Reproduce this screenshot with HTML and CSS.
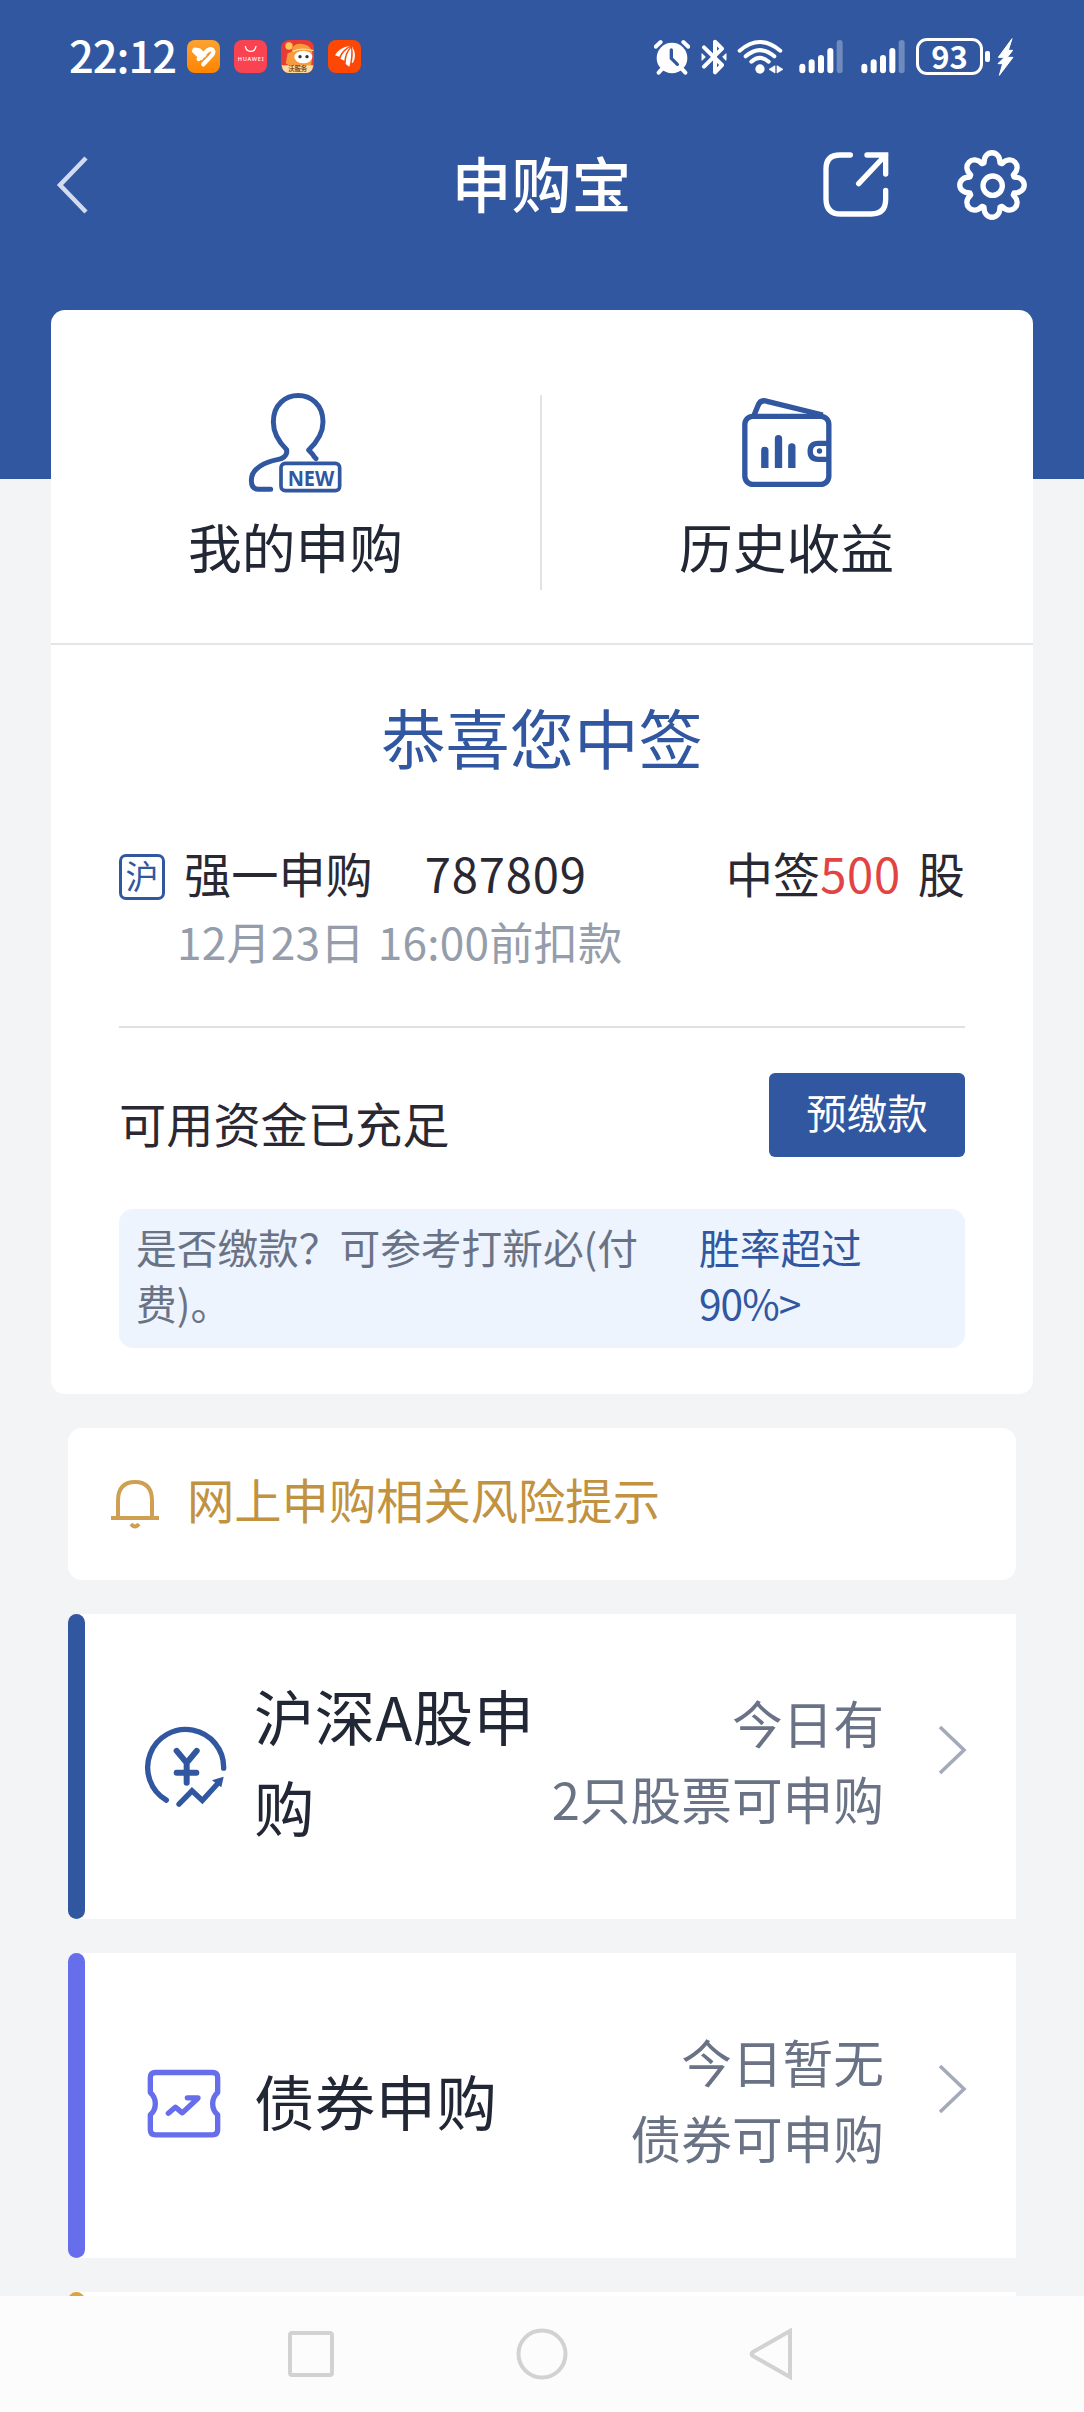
FILE: index.html
```html
<!DOCTYPE html>
<html lang="zh-CN">
<head>
<meta charset="utf-8">
<title>申购宝</title>
<link rel="stylesheet" href="styles.css">
</head>
<body>
<div class="screen">
  <div class="status">
    <span class="time">22:12</span>
    <div class="apps">
      <svg width="33" height="33" viewBox="0 0 99 99"><defs><linearGradient id="o" x1="0" y1="0" x2="0" y2="1"><stop offset="0" stop-color="#fba232"/><stop offset="1" stop-color="#ff8500"/></linearGradient></defs><rect width="99" height="99" rx="24" fill="url(#o)"/><g stroke="#fff" stroke-width="13" stroke-linecap="round" fill="none"><path d="M21 33L43 54M23 29L36 31L52 46"/><path d="M35 57L62 31Q76 23 79 35Q79 42 72 48L49 73"/></g><path d="M42 66L67 42" stroke="#fc9420" stroke-width="4"/></svg>
      <svg width="33" height="33" viewBox="0 0 99 99"><rect width="99" height="99" rx="24" fill="#fa4350"/><path d="M34 18Q36 34 50 34T66 18" fill="none" stroke="#fff" stroke-width="4"/><text x="50" y="63" class="brand" text-anchor="middle" textLength="78">HUAWEI</text></svg>
      <svg width="33" height="33" viewBox="0 0 99 99"><rect width="99" height="99" rx="24" fill="#e83b36"/><path d="M32 35Q34 8 63 12Q96 16 94 48L90 80H30L14 70L20 40Z" fill="#f79b3c"/><circle cx="24" cy="18" r="11" fill="#ffc857"/><path d="M35 34Q62 22 97 32" stroke="#ffe0a0" stroke-width="4" fill="none"/><ellipse cx="67" cy="51" rx="27" ry="19" fill="#fff"/><circle cx="57" cy="50" r="5" fill="#333"/><circle cx="78" cy="50" r="5" fill="#333"/><path d="M2 76H97Q94 99 75 99H24Q5 99 2 76Z" fill="#f9dda5"/><text x="50" y="93" class="tag" text-anchor="middle">沃服务</text></svg>
      <svg width="33" height="33" viewBox="0 0 99 99"><rect width="99" height="99" rx="24" fill="#fd4705"/><path d="M21 46Q34 22 66 18Q43 28 34 50ZM37 56Q43 35 67 21Q51 38 49 62ZM53 72Q53 42 69 24Q72 50 64 80ZM71 68Q77 45 72 19Q88 45 75 68Z" fill="#fff"/></svg>
    </div>
    <div class="system">
      <svg class="alarm" width="36" height="36" viewBox="0 0 108 108"><circle cx="54" cy="57" r="46" fill="#fff"/><path d="M5 23L20 9M88 9L103 23M23 91L14 101M85 91L94 101" stroke="#fff" stroke-width="12" stroke-linecap="round"/><path d="M52 33V58L70 76" fill="none" stroke="#30579f" stroke-width="10" stroke-linecap="round"/></svg>
      <svg class="bt" width="26" height="36" viewBox="0 0 78 108"><path d="M9 25L63 78L42 100V8L63 29L9 83" fill="none" stroke="#fff" stroke-width="12" stroke-linejoin="round" stroke-linecap="round"/><path d="M3 44L13 54L3 64ZM75 44L65 54L75 64Z" fill="#fff" stroke="#fff" stroke-width="3"/></svg>
      <svg class="wifi" width="46" height="36" viewBox="0 0 138 108"><g fill="none" stroke="#fff" stroke-width="12" stroke-linecap="round"><path d="M8 35Q69 -17 130 35M26 52Q69 15 112 52M43 68Q69 45 95 68"/></g><circle cx="69" cy="90" r="14" fill="#fff"/><path d="M114 80V102L96 91ZM120 80V102L138 91Z" fill="#fff" stroke="#fff" stroke-width="2"/></svg>
      <svg class="sig" width="44" height="36" viewBox="0 0 132 108"><g stroke="#fff" stroke-width="18" stroke-linecap="round"><path d="M10 83V94M38 70V94M66 57V94M94 36V94"/><path d="M122 12V94" opacity=".3"/></g></svg>
      <svg class="sig2" width="44" height="36" viewBox="0 0 132 108"><g stroke="#fff" stroke-width="18" stroke-linecap="round"><path d="M10 83V94M38 70V94M66 57V94M94 36V94"/><path d="M122 12V94" opacity=".3"/></g></svg>
      <span class="battery">93</span><span class="nub"></span>
      <svg class="bolt" width="17" height="38" viewBox="0 0 51 114"><path d="M45 2L4 58H22L3 77H17L7 112L48 58H31L47 37H34Z" fill="#fff" stroke="#fff" stroke-width="3" stroke-linejoin="round"/></svg>
    </div>
  </div>

  <header class="navbar">
    <svg width="36" height="62" viewBox="0 0 36 62"><path d="M31 4L5 31L31 58" fill="none" stroke="#d3dbf0" stroke-width="4.5"/></svg>
    <h1>申购宝</h1>
    <div class="tools">
      <svg width="66" height="66" viewBox="69 65 198 198"><path d="M151 74H120Q78 74 78 116V205Q78 251 123 251H214Q257 251 257 207V180M201 74H257V131M257 74L176 160" fill="none" stroke="#fff" stroke-width="16" stroke-linecap="round" stroke-linejoin="miter"/></svg>
      <svg width="72" height="72" viewBox="-108 -108 216 216"><g fill="none" stroke="#fff" stroke-width="16" stroke-linejoin="round"><path d="M-24 -66C-25 -107 25 -107 24 -66L30 -64C58 -94 94 -58 64 -30L66 -24C107 -25 107 25 66 24L64 30C94 58 58 94 30 64L24 66C25 107 -25 107 -24 66L-30 64C-58 94 -94 58 -64 30L-66 24C-107 25 -107 -25 -66 -24L-64 -30C-94 -58 -58 -94 -30 -64Z"/><circle cx="2" cy="2" r="29"/></g></svg>
    </div>
  </header>

  <main>
    <section class="card">
      <div class="entries">
        <a class="entry">
          <svg width="120" height="120" viewBox="-9 0 360 360"><g fill="none" stroke="#30579f" stroke-width="15" stroke-linecap="round" stroke-linejoin="round"><path d="M231 236Q224 230 221 223L209 210Q252 169 252 126C252 20 103 20 103 126Q103 170 143 209V218Q140 234 115 239C83 245 37 263 37 301Q37 328 58 328H95"/><rect x="126" y="250" width="176" height="82" rx="13" stroke-width="11"/></g><text x="216" y="317" class="new" text-anchor="middle" textLength="140" lengthAdjust="spacingAndGlyphs">NEW</text></svg>
          <span>我的申购</span>
        </a>
        <a class="entry">
          <svg width="120" height="120" viewBox="-6.5 0 360 360"><g fill="none" stroke="#30579f" stroke-width="16" stroke-linejoin="round"><rect x="47" y="109" width="252" height="204" rx="24"/><path d="M74 107L87 76Q94 57 114 64L281 105"/><path d="M299 190H267Q243 190 243 214T267 238H299"/></g><circle cx="271" cy="213" r="8" fill="#30579f"/><path d="M96 264V211Q96 200 107 200T118 211V264ZM137 264V176Q137 165 148 165T159 176V264ZM177 264V201Q177 190 188 190T199 201V264Z" fill="#30579f"/></svg>
          <span>历史收益</span>
        </a>
      </div>
      <div class="win">
        <h2>恭喜您中签</h2>
        <div class="stock">
          <span class="market">沪</span><span class="name">强一申购</span><span class="code">787809</span>
          <span class="result">中签<b>500</b>股</span>
        </div>
        <p class="deadline">12月23日 16:00前扣款</p>
        <div class="funds"><span>可用资金已充足</span><button>预缴款</button></div>
        <div class="notice"><p>是否缴款？可参考打新必(付费)。</p><a>胜率超过<br><span class="rate">90%&gt;</span></a></div>
      </div>
    </section>

    <section class="risk">
      <svg width="52" height="52" viewBox="0 0 52 52"><path d="M9 41V24Q9 5 26 5T43 24V41M2 41H50M22 47Q26 52 30 47" fill="none" stroke="#cfa052" stroke-width="4" stroke-linejoin="round"/></svg>
      <span>网上申购相关风险提示</span>
    </section>

    <section class="item">
      <svg width="120" height="120" viewBox="0 -10.5 360 360"><g fill="none" stroke="#30579f" stroke-width="16" stroke-linecap="round"><path d="M109 269A114 114 0 1 1 281 173M147 281L186 241L217 270L264 218"/><path d="M140 121L170 157L200 121M170 157V217M140 187H199" stroke-width="18"/></g><path d="M281 199L274 230L246 209Z" fill="#30579f"/></svg>
      <h3>沪深A股申购</h3>
      <p>今日有<br>2只股票可申购</p>
      <svg class="go" width="36" height="52" viewBox="0 0 36 52"><path d="M6 3L30 26L6 49" fill="none" stroke="#a4abb8" stroke-width="3.6"/></svg>
    </section>

    <section class="item bond">
      <svg width="120" height="120" viewBox="0 1006.5 360 360"><g fill="none" stroke="#666eeb" stroke-width="16" stroke-linejoin="round"><path d="M77 1086H247Q263 1086 263 1101V1146C243 1164 243 1196 263 1213V1258Q263 1273 247 1273H77Q61 1273 61 1258V1213C81 1196 81 1164 61 1146V1101Q61 1086 77 1086Z"/><path d="M115 1208L136 1190L157 1207L203 1164M172 1162H204" stroke-linecap="round"/></g></svg>
      <h3>债券申购</h3>
      <p>今日暂无<br>债券可申购</p>
      <svg class="go" width="36" height="52" viewBox="0 0 36 52"><path d="M6 3L30 26L6 49" fill="none" stroke="#a4abb8" stroke-width="3.6"/></svg>
    </section>

    <section class="item next"></section>
  </main>

  <nav class="keys">
    <svg width="52" height="52" viewBox="0 0 52 52"><rect x="5" y="5" width="42" height="42" rx="2"/></svg>
    <svg width="52" height="52" viewBox="0 0 52 52"><circle cx="26" cy="26" r="23.5"/></svg>
    <svg width="52" height="52" viewBox="0 0 52 52"><path d="M43 3V49L6 28Q3 26 6 24Z"/></svg>
  </nav>
</div>
</body>
</html>
```
FILE: styles.css
```css
* { box-sizing: border-box; margin: 0; padding: 0; }
body { width: 1084px; font-family: "Noto Sans CJK SC", "Noto Sans", sans-serif; color: #212734; }
svg { display: block; flex: none; }
h1, h2, h3 { font-weight: 400; }
.screen { height: 2412px; overflow: hidden; display: flex; flex-direction: column; background: linear-gradient(#30579f 479px, #f3f4f6 479px); }

.status { height: 113px; flex: none; display: flex; align-items: center; padding-left: 69px; color: #fff; }
.time { width: 118px; padding-bottom: 4px; font-size: 43.5px; line-height: 60px; font-weight: 500; letter-spacing: -1px; white-space: nowrap; }
.apps { display: flex; gap: 14px; }
.brand { font: 500 17px "Noto Sans", sans-serif; fill: #fff; }
.tag { font-size: 19px; font-weight: 700; fill: #8a4a18; }
.system { display: flex; align-items: center; margin-left: 293px; }
.bt { margin-left: 11px; }
.wifi { margin-left: 10px; }
.sig { margin-left: 16px; }
.sig2 { margin-left: 18px; }
.battery { width: 67px; height: 37px; margin-left: 11px; border: 3px solid #fff; border-radius: 11px; font-size: 31px; line-height: 29px; font-weight: 700; text-align: center; }
.nub { width: 5px; height: 11px; margin-left: 2px; border-radius: 2px; background: #fff; }
.bolt { margin-left: 7px; }

.navbar { height: 144px; flex: none; display: grid; grid-template-columns: 1fr auto 1fr; align-items: center; padding: 0 56px 0 55px; color: #fff; }
.navbar h1 { font-size: 60px; line-height: 80px; font-weight: 500; padding-bottom: 6px; }
.tools { display: flex; align-items: center; justify-content: flex-end; gap: 67px; }

main { flex: 1; min-height: 0; overflow: hidden; padding-top: 53px; }
.card { margin: 0 51px; height: 1084px; border-radius: 14px; background: #fff; }
.entries { height: 335px; display: flex; border-bottom: 2px solid #e4e5e7; }
.entry { width: 489px; display: flex; flex-direction: column; align-items: center; padding-top: 70px; }
.entry span { margin-top: 8px; font-size: 53.8px; line-height: 76px; }
.entry + .entry { width: 493px; background: linear-gradient(#e2e3e6, #e2e3e6) 0 85px / 2px 195px no-repeat; }
.new { font: 700 66px "Open Sans", sans-serif; fill: #30579f; }

.win { padding: 46px 68px 0; color: #292833; }
.win h2 { font-size: 64.3px; line-height: 90px; text-align: center; color: #30579f; }
.stock { display: flex; align-items: center; margin-top: 59px; font-size: 47.2px; line-height: 66px; }
.market { width: 46px; height: 46px; margin-top: 7px; border: 3px solid #30579f; border-radius: 7px; font-size: 33px; line-height: 36px; text-align: center; color: #30579f; }
.name { margin-left: 19px; }
.code { margin-left: 52px; letter-spacing: 0.8px; }
.result { margin-left: auto; }
.result b { font-weight: 400; color: #e24444; letter-spacing: 0.7px; margin-right: 17px; }
.deadline { padding: 2px 0 52px 58px; border-bottom: 2px solid #dfe0e3; font-size: 44.2px; line-height: 66px; letter-spacing: 0.2px; word-spacing: 3px; color: #959dab; }
.funds { height: 84px; margin-top: 45px; display: flex; justify-content: space-between; font-size: 47.2px; line-height: 84px; }
.funds span { padding-top: 8px; }
.funds button { width: 196px; height: 84px; padding-bottom: 6px; border: 0; border-radius: 6px; background: #30579f; color: #fff; font: 40.5px/78px "Noto Sans CJK SC", sans-serif; }
.notice { height: 139px; margin-top: 52px; display: flex; padding: 10px 17px; border-radius: 14px; background: #edf4fe; font-size: 40.7px; line-height: 56px; color: #6a7386; }
.notice p { width: 522px; margin-right: 41px; }
.notice a { color: #30579f; }
.rate { letter-spacing: -1px; }

.risk { height: 152px; margin: 34px 68px 0; padding: 0 0 11px 41px; display: flex; align-items: center; border-radius: 14px; background: #fff; color: #c1923f; }
.risk svg { margin-top: 8px; }
.risk span { margin-left: 26px; font-size: 47.3px; line-height: 66px; }

.item { height: 305px; margin: 34px 68px 0; display: flex; align-items: center; padding-left: 62px; position: relative; background: linear-gradient(90deg, #f3f4f6 8px, #fff 8px); }
.item::before { content: ""; position: absolute; left: 0; top: 0; width: 17px; height: 100%; border-radius: 9px; background: #30579f; }
.item.bond::before { background: #666eeb; }
.item.next::before { background: #dfa23c; }
.item h3 { width: 290px; margin-left: 4px; padding-bottom: 13px; font-size: 60.5px; line-height: 91px; letter-spacing: 0.3px; }
.item p { flex: 1; padding-bottom: 13px; text-align: right; font-size: 50.7px; line-height: 76px; color: #6a7386; white-space: nowrap; }
.go { margin: 0 46px 34px 50px; }

.keys { height: 116px; flex: none; display: flex; justify-content: center; gap: 179px; padding-top: 32px; background: #fcfcfc; }
.keys svg { fill: none; stroke: #d2d2d2; stroke-width: 4; }
```
